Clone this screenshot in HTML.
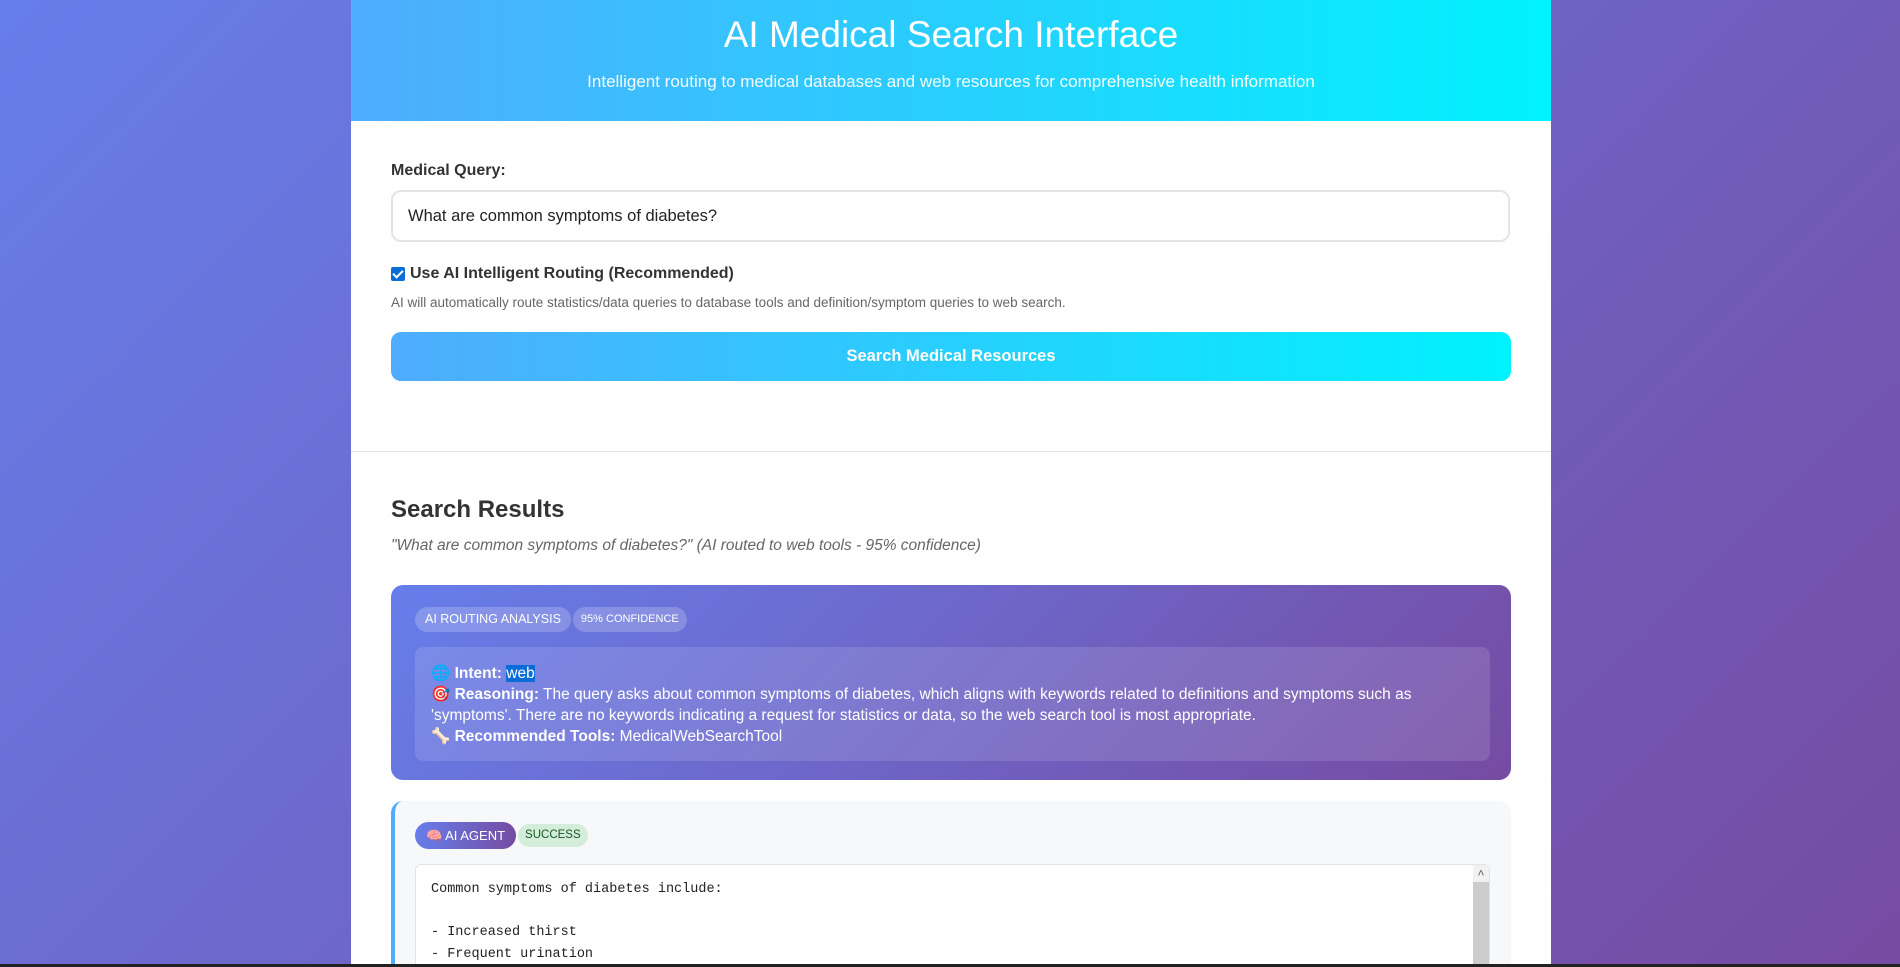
<!DOCTYPE html>
<html><head><meta charset="utf-8"><style>
*{box-sizing:border-box;margin:0;padding:0}
html,body{width:1900px;height:967px;overflow:hidden}
body{font-family:"Liberation Sans",sans-serif;background:linear-gradient(135deg,#667eea 0%,#764ba2 100%);position:relative}
.c{position:absolute;left:351px;top:0;width:1200px;height:964px;background:#fff;overflow:hidden}
.hd{height:121px;background:linear-gradient(90deg,#4facfe,#00f2fe);color:#fff;text-align:center}
.hd h1{font-weight:normal;font-size:37px;padding-top:13px;line-height:44px}
.hd p{font-size:17px;margin-top:15px;opacity:.95}
.lbl{position:absolute;left:40px;top:162px;font-size:16px;font-weight:bold;color:#333}
.inp{position:absolute;left:40px;top:190px;width:1119px;height:52px;border:2px solid #e1e5e9;border-radius:10px;font-size:16.5px;padding:15px 15px;color:#222}
.chk{position:absolute;left:40px;top:265px;font-size:16px;color:#333;font-weight:bold;display:flex;align-items:center}
.chk i{width:14px;height:14px;background:#0a6cd6;border-radius:2px;margin-right:5px;display:inline-block;position:relative}
.chk i:after{content:"";position:absolute;left:4px;top:1px;width:4px;height:8px;border:solid #fff;border-width:0 2px 2px 0;transform:rotate(45deg)}
.hint{position:absolute;left:40px;top:295px;font-size:13.5px;color:#666}
.btn{position:absolute;left:40px;top:332px;width:1120px;height:49px;border-radius:10px;background:linear-gradient(90deg,#4facfe,#00f2fe);color:#fff;font-weight:bold;font-size:16.5px;text-align:center;line-height:49px}
.hr{position:absolute;left:0;top:451px;width:1200px;height:1px;background:#e5e5e5}
.sr{position:absolute;left:40px;top:496px;font-size:24px;font-weight:bold;color:#333}
.q{position:absolute;left:40px;top:537px;font-size:15.5px;font-style:italic;color:#666}
.rc{position:absolute;left:40px;top:585px;width:1120px;height:195px;border-radius:12px;background:linear-gradient(135deg,#667eea,#764ba2);color:#fff}
.bds{position:absolute;left:24px;top:22px;display:flex;gap:2px}
.bd{height:25px;border-radius:13px;background:rgba(255,255,255,.2);font-size:12.5px;line-height:25px;padding:0 10px}
.ib{position:absolute;left:24px;top:62px;width:1075px;height:114px;border-radius:8px;background:rgba(255,255,255,.12);padding:16px 16px;font-size:15.5px;line-height:21px}
.ac{position:absolute;left:40px;top:801px;width:1120px;height:200px;border-radius:12px;background:#f7f8fa;border-left:4px solid #4facfe}
.tg{position:absolute;left:20px;top:21px;display:flex;gap:2px}
.ag{height:27px;border-radius:14px;background:linear-gradient(90deg,#667eea,#764ba2);color:#fff;font-size:13px;line-height:27px;padding:0 11px}
.su{margin-top:2px;height:23px;border-radius:12px;background:#d4edda;color:#155724;font-size:11.5px;line-height:23px;padding:0 7px}
.pre{position:absolute;left:20px;top:63px;width:1075px;height:200px;background:#fff;border:1px solid #e1e5e9;border-radius:6px;font-family:"Liberation Mono",monospace;font-size:13.5px;padding:14px 15px;line-height:21.5px;color:#222;white-space:pre}
.sb{position:absolute;right:0;top:0;width:16px;height:200px;background:#ccc}
.sb:before{content:"^";position:absolute;top:0;left:0;width:16px;height:17px;background:#f1f1f1;color:#555;font-size:12px;text-align:center}
.bar{position:absolute;left:0;top:964px;width:1900px;height:3px;background:#222}
</style></head><body>
<div class="c">
<div class="hd"><h1>AI Medical Search Interface</h1><p>Intelligent routing to medical databases and web resources for comprehensive health information</p></div>
<div class="lbl">Medical Query:</div>
<div class="inp">What are common symptoms of diabetes?</div>
<div class="chk"><i></i>Use AI Intelligent Routing (Recommended)</div>
<div class="hint">AI will automatically route statistics/data queries to database tools and definition/symptom queries to web search.</div>
<div class="btn">Search Medical Resources</div>
<div class="hr"></div>
<div class="sr">Search Results</div>
<div class="q">"What are common symptoms of diabetes?" (AI routed to web tools - 95% confidence)</div>
<div class="rc">
<div class="bds"><span class="bd">AI ROUTING ANALYSIS</span><span class="bd" style="font-size:11px;padding:0 8px">95% CONFIDENCE</span></div>
<div class="ib">🌐 <b>Intent:</b> <span style="background:#0a6cd6">web</span><br>🎯 <b>Reasoning:</b> The query asks about common symptoms of diabetes, which aligns with keywords related to definitions and symptoms such as 'symptoms'. There are no keywords indicating a request for statistics or data, so the web search tool is most appropriate.<br>🦴 <b>Recommended Tools:</b> MedicalWebSearchTool</div>
</div>
<div class="ac">
<div class="tg"><span class="ag">🧠 AI AGENT</span><span class="su">SUCCESS</span></div>
<div class="pre">Common symptoms of diabetes include:

- Increased thirst
- Frequent urination<div class="sb"></div></div>
</div>
</div>
<div class="bar"></div>
</body></html>
